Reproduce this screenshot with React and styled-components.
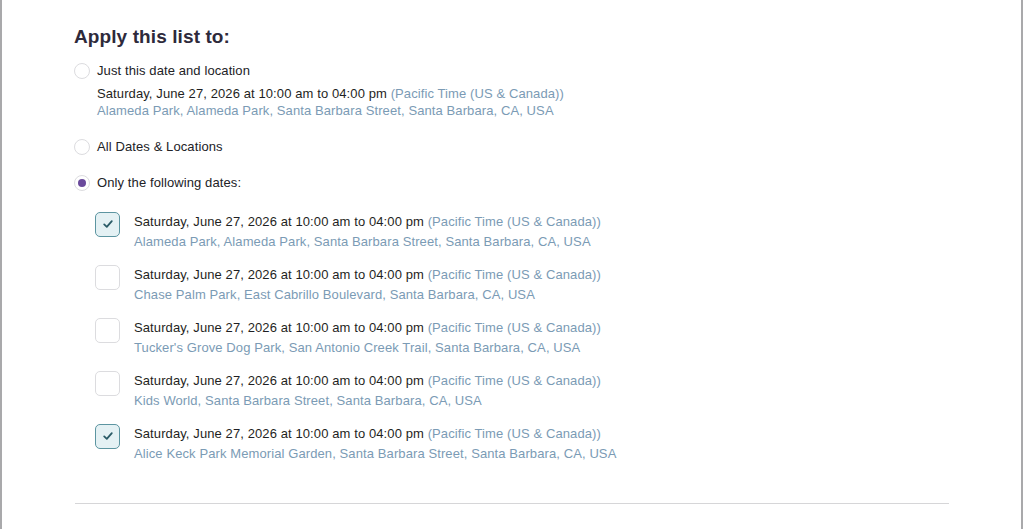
import { useState } from "react";
import styled, { createGlobalStyle } from "styled-components";

const GlobalStyle = createGlobalStyle`
  html, body {
    margin: 0;
    padding: 0;
    background: #ffffff;
  }
  body {
    font-family: "Liberation Sans", Arial, sans-serif;
  }
`;

const DATE_TEXT = "Saturday, June 27, 2026 at 10:00 am to 04:00 pm";
const TZ_TEXT = "(Pacific Time (US & Canada))";

const LOCATIONS = [
  "Alameda Park, Alameda Park, Santa Barbara Street, Santa Barbara, CA, USA",
  "Chase Palm Park, East Cabrillo Boulevard, Santa Barbara, CA, USA",
  "Tucker's Grove Dog Park, San Antonio Creek Trail, Santa Barbara, CA, USA",
  "Kids World, Santa Barbara Street, Santa Barbara, CA, USA",
  "Alice Keck Park Memorial Garden, Santa Barbara Street, Santa Barbara, CA, USA",
];

// 適用範囲の選択パネル
export default function App() {
  const [scope, setScope] = useState("following");
  const [checked, setChecked] = useState([true, false, false, false, true]);

  const toggle = (i) => {
    setChecked(checked.map((c, j) => (j === i ? !c : c)));
  };

  return (
    <>
      <GlobalStyle />
      <SFrame>
        <SContent>
          <STitle>Apply this list to:</STitle>

          <SOption onClick={() => setScope("single")}>
            <SRadio $on={scope === "single"} />
            <div>
              <SLabel>Just this date and location</SLabel>
              <SDetails>
                <SLine>
                  {DATE_TEXT} <STz>{TZ_TEXT}</STz>
                </SLine>
                <SPlace>{LOCATIONS[0]}</SPlace>
              </SDetails>
            </div>
          </SOption>

          <SOption onClick={() => setScope("all")}>
            <SRadio $on={scope === "all"} />
            <SLabel>All Dates &amp; Locations</SLabel>
          </SOption>

          <SOption onClick={() => setScope("following")}>
            <SRadio $on={scope === "following"} />
            <SLabel>Only the following dates:</SLabel>
          </SOption>

          <SDateList>
            {LOCATIONS.map((loc, i) => (
              <SDateRow key={i} onClick={() => toggle(i)}>
                <SCheck $on={checked[i]}>
                  {checked[i] && (
                    <svg width="14" height="14" viewBox="0 0 14 14">
                      <path
                        d="M3.2 7.4 L5.8 9.8 L10.8 4.2"
                        fill="none"
                        stroke="#2a5b67"
                        strokeWidth="1.8"
                        strokeLinecap="round"
                        strokeLinejoin="round"
                      />
                    </svg>
                  )}
                </SCheck>
                <div>
                  <SLine>
                    {DATE_TEXT} <STz>{TZ_TEXT}</STz>
                  </SLine>
                  <SPlace $gap>{loc}</SPlace>
                </div>
              </SDateRow>
            ))}
          </SDateList>

          <SDivider />
        </SContent>
      </SFrame>
    </>
  );
}

const SFrame = styled.div`
  height: 529px;
  box-sizing: border-box;
  border-left: 2px solid #a9a9ab;
  border-right: 2px solid #a9a9ab;
  margin-right: 1px;
  overflow: hidden;
`;

const SContent = styled.div`
  padding: 25px 72px 0 72px;
`;

const STitle = styled.h2`
  margin: 0 0 13px 0;
  font-size: 19px;
  line-height: 24px;
  font-weight: 700;
  color: #2e2a3b;
  letter-spacing: 0.1px;
`;

const SOption = styled.div`
  display: flex;
  align-items: flex-start;
  gap: 7px;
  margin-bottom: 19px;
  cursor: pointer;
`;

const SRadio = styled.span`
  flex: none;
  width: 16px;
  height: 16px;
  box-sizing: border-box;
  border: 1px solid #dcdcdf;
  border-radius: 50%;
  margin-top: 0.5px;
  display: flex;
  align-items: center;
  justify-content: center;
  background: #fff;
  &::after {
    content: "";
    display: ${(p) => (p.$on ? "block" : "none")};
    width: 8px;
    height: 8px;
    border-radius: 50%;
    background: #6a4a9c;
  }
`;

const SLabel = styled.div`
  font-size: 13px;
  line-height: 17px;
  color: #222226;
  letter-spacing: 0.1px;
`;

const SDetails = styled.div`
  margin-top: 6px;
`;

const SLine = styled.div`
  font-size: 13px;
  line-height: 17px;
  color: #1f1f23;
  letter-spacing: 0.1px;
  white-space: nowrap;
`;

const STz = styled.span`
  color: #7b9bb5;
`;

const SPlace = styled.div`
  font-size: 13px;
  line-height: 17px;
  color: #7b9bb5;
  letter-spacing: 0.1px;
  margin-top: ${(p) => (p.$gap ? "3px" : "0")};
  white-space: nowrap;
`;

const SDateList = styled.div`
  display: flex;
  flex-direction: column;
  gap: 15px;
  padding-left: 21px;
  margin-top: 21px;
`;

const SDateRow = styled.div`
  display: flex;
  align-items: flex-start;
  gap: 14px;
  padding-top: 1px;
  cursor: pointer;
`;

const SCheck = styled.span`
  flex: none;
  width: 25px;
  height: 25px;
  box-sizing: border-box;
  margin-top: -1.5px;
  border: 1px solid ${(p) => (p.$on ? "#5c95a1" : "#dcdcdf")};
  background: ${(p) => (p.$on ? "#e4f1f4" : "#fff")};
  border-radius: 5px;
  display: flex;
  align-items: center;
  justify-content: center;
`;

const SDivider = styled.hr`
  margin: 41px 0 0 1px;
  border: none;
  border-top: 1px solid #d6d6d8;
`;
